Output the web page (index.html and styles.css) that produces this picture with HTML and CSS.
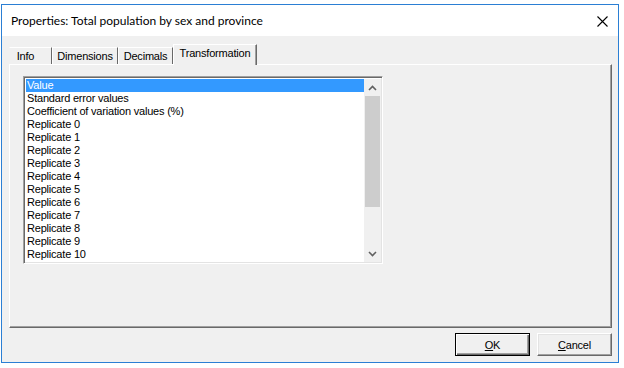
FILE: index.html
```html
<!DOCTYPE html>
<html lang="en">
<head>
  <meta charset="UTF-8">
  <title>Properties: Total population by sex and province</title>
  <link rel="stylesheet" href="styles.css">
</head>
<body>
  <div class="window">
    <div class="titlebar">
      <span class="title">Properties: Total population by sex and province</span>
      <svg class="close" width="11" height="11" viewBox="0 0 11 11">
        <path d="M0.5 0.5 L10.5 10.5 M10.5 0.5 L0.5 10.5" stroke="#000" stroke-width="1.1" fill="none"/>
      </svg>
    </div>

    <div class="body">
      <div class="tabs">
        <div class="tab tab-info">Info</div>
        <div class="tab tab-dims">Dimensions</div>
        <div class="tab tab-dec">Decimals</div>
        <div class="tab tab-trans active">Transformation</div>
      </div>

      <div class="panel">
        <div class="listbox">
          <ul class="items">
            <li class="selected">Value</li>
            <li>Standard error values</li>
            <li>Coefficient of variation values (%)</li>
            <li>Replicate 0</li>
            <li>Replicate 1</li>
            <li>Replicate 2</li>
            <li>Replicate 3</li>
            <li>Replicate 4</li>
            <li>Replicate 5</li>
            <li>Replicate 6</li>
            <li>Replicate 7</li>
            <li>Replicate 8</li>
            <li>Replicate 9</li>
            <li>Replicate 10</li>
            <li>Replicate 11</li>
          </ul>
          <div class="scrollbar">
            <div class="arrow">
              <svg width="9" height="6" viewBox="0 0 9 6"><path d="M1 5 L4.5 1.5 L8 5" stroke="#606060" stroke-width="1.6" fill="none"/></svg>
            </div>
            <div class="thumb"></div>
            <div class="track"></div>
            <div class="arrow">
              <svg width="9" height="6" viewBox="0 0 9 6"><path d="M1 1 L4.5 4.5 L8 1" stroke="#606060" stroke-width="1.6" fill="none"/></svg>
            </div>
          </div>
        </div>
      </div>

      <div class="buttons">
        <button class="btn default"><u>O</u>K</button>
        <button class="btn"><u>C</u>ancel</button>
      </div>
    </div>
  </div>
</body>
</html>
```

FILE: styles.css
```css
body {
  margin: 0;
  background: #ffffff;
  font-family: 'Liberation Sans', Arial, sans-serif;
}
.window {
  margin: 4px 0 0 1px;
  width: 618px;
  height: 359px;
  box-sizing: border-box;
  border: 1px solid #2b7fd4;
  display: flex;
  flex-direction: column;
}
.titlebar {
  height: 31px;
  background: #ffffff;
  display: flex;
  align-items: center;
  justify-content: space-between;
  padding: 0 10px 0 9px;
  font-family: Lato, 'Noto Sans', sans-serif;
  font-size: 12px;
  color: #000;
}
.close {
  display: block;
  margin-top: 1px;
}
.body {
  flex: 1;
  background: #f0f0f0;
  padding: 8px 6px 0 7px;
  display: flex;
  flex-direction: column;
  font-size: 11px;
  letter-spacing: -0.2px;
  color: #000;
}
.tabs {
  height: 20px;
  display: flex;
  align-items: flex-end;
}
.tab {
  height: 17px;
  box-sizing: border-box;
  border-top: 1px solid #ffffff;
  border-left: 1px solid #ffffff;
  border-right: 1px solid #696969;
  text-align: center;
  line-height: 16px;
  background: #f0f0f0;
}
.tab-info { width: 43px; border-left-color: #f0f0f0; padding-right: 10px; }
.tab-dims { width: 66px; }
.tab-dec { width: 55px; }
.tab-trans { width: 84px; }
.tab.active {
  height: 21px;
  margin-bottom: -1px;
  position: relative;
  z-index: 1;
  line-height: 17px;
  box-shadow: inset -1px 0 #a0a0a0;
}
.panel {
  height: 264px;
  box-sizing: border-box;
  border-top: 1px solid #ffffff;
  border-left: 1px solid #ffffff;
  border-right: 1px solid #696969;
  border-bottom: 1px solid #696969;
  box-shadow: inset -1px -1px #a0a0a0;
  padding: 11px 0 0 13px;
}
.listbox {
  width: 360px;
  height: 188px;
  box-sizing: border-box;
  border-top: 1px solid #a0a0a0;
  border-left: 1px solid #a0a0a0;
  border-right: 1px solid #ffffff;
  border-bottom: 1px solid #ffffff;
  box-shadow: inset 1px 1px #696969, inset -1px -1px #e3e3e3;
  padding: 2px 1px 1px 2px;
  background: #ffffff;
  display: flex;
  overflow: hidden;
}
.items {
  flex: 1;
  list-style: none;
  margin: 0;
  padding: 0;
  overflow: hidden;
}
.items li {
  height: 13px;
  line-height: 13px;
  padding-left: 1px;
  white-space: nowrap;
}
.items li.selected {
  background: #3399ff;
  color: #ffffff;
}
.scrollbar {
  width: 17px;
  display: flex;
  flex-direction: column;
  background: #f0f0f0;
}
.arrow {
  height: 17px;
  display: flex;
  align-items: center;
  justify-content: center;
}
.thumb {
  height: 111px;
  background: #cdcdcd;
  margin: 0 1px;
}
.track {
  flex: 1;
}
.buttons {
  display: flex;
  justify-content: flex-end;
  gap: 7px;
  margin-top: 5px;
}
.btn {
  width: 75px;
  height: 23px;
  box-sizing: border-box;
  background: #f0f0f0;
  font-family: 'Liberation Sans', Arial, sans-serif;
  font-size: 11px;
  letter-spacing: -0.2px;
  color: #000;
  border-top: 1px solid #ffffff;
  border-left: 1px solid #ffffff;
  border-right: 1px solid #696969;
  border-bottom: 1px solid #696969;
  box-shadow: inset -1px -1px #a0a0a0, inset 1px 1px #e3e3e3;
  padding: 0;
}
.btn.default {
  border: 1px solid #000000;
  box-shadow: inset 1px 1px #ffffff, inset -1px -1px #696969, inset -2px -2px #a0a0a0;
}
```
